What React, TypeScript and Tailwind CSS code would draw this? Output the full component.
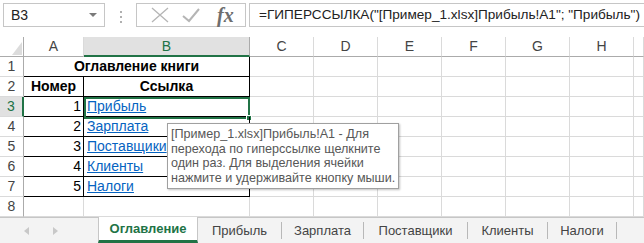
import React from 'react';

const font = { fontFamily: '"Liberation Sans", Arial, sans-serif' };

const colLetters = ['A', 'B', 'C', 'D', 'E', 'F', 'G', 'H', ''];
const colWidths = ['w-[60px]', 'w-[166px]', 'w-[64px]', 'w-[64px]', 'w-[64px]', 'w-[64px]', 'w-[64px]', 'w-[64px]', 'w-[10px]'];

const rows = [
  { n: 1, merged: 'Оглавление книги' },
  { n: 2, a: 'Номер', b: 'Ссылка', head: true },
  { n: 3, a: '1', b: 'Прибыль' },
  { n: 4, a: '2', b: 'Зарплата' },
  { n: 5, a: '3', b: 'Поставщики' },
  { n: 6, a: '4', b: 'Клиенты' },
  { n: 7, a: '5', b: 'Налоги' },
  { n: 8 },
];

const tabs = [
  { name: 'Прибыль', w: 'w-[84px]' },
  { name: 'Зарплата', w: 'w-[82px]' },
  { name: 'Поставщики', w: 'w-[104px]' },
  { name: 'Клиенты', w: 'w-[80px]' },
  { name: 'Налоги', w: 'w-[69px]' },
];

function FormulaBar() {
  return (
    <div className="flex h-[37px] items-start bg-white pt-[3px]">
      <div className="ml-[3px] flex h-[24px] w-[102px] items-center justify-between border border-[#c6c6c6] pl-[7px] pr-[7px]">
        <span className="text-[14px] text-[#222]">B3</span>
        <svg width="8" height="5" viewBox="0 0 8 5">
          <path d="M0 0 L8 0 L4 4 Z" fill="#7a7a7a" />
        </svg>
      </div>
      <div className="flex w-[31px] flex-col items-center justify-center gap-[3px] pt-[8px]">
        <div className="h-[2px] w-[2px] bg-[#b0b0b0]" />
        <div className="h-[2px] w-[2px] bg-[#b0b0b0]" />
        <div className="h-[2px] w-[2px] bg-[#b0b0b0]" />
      </div>
      <div className="flex h-[24px] w-[110px] items-center border border-[#c6c6c6]">
        <svg width="20" height="16" viewBox="0 0 20 16" className="ml-[13px]">
          <path d="M2 1 L18 15 M18 1 L2 15" stroke="#b5b5b5" strokeWidth="1.3" fill="none" />
        </svg>
        <svg width="20" height="16" viewBox="0 0 20 16" className="ml-[11px]">
          <path d="M2 9 L8 14 L18 2" stroke="#b5b5b5" strokeWidth="2" fill="none" />
        </svg>
        <span
          className="ml-[16px] text-[20px] italic leading-none text-[#6e6e6e]"
          style={{ fontFamily: '"Liberation Serif", "Times New Roman", serif', fontWeight: 700 }}
        >
          fx
        </span>
      </div>
      <div className="ml-[3px] flex h-[24px] flex-1 items-center border border-r-0 border-[#c6c6c6] pl-[9px]">
        <span className="whitespace-nowrap text-[13.6px] text-[#222]">
          =ГИПЕРССЫЛКА("[Пример_1.xlsx]Прибыль!A1"; "Прибыль")
        </span>
      </div>
    </div>
  );
}

function HeaderRow() {
  return (
    <div className="flex h-[20px]">
      <div className="relative w-[24px] border-b border-r border-[#ababab] bg-white">
        <svg width="10" height="13" viewBox="0 0 10 13" className="absolute bottom-[1px] right-[1px]">
          <path d="M10 0 L10 13 L0 13 Z" fill="#dcdcdc" />
        </svg>
      </div>
      {colLetters.map((c, i) => (
        <div
          key={i}
          className={`${colWidths[i]} flex items-center justify-center text-[14px] ${
            c === 'B'
              ? 'border-b-2 border-r border-b-[#217346] border-r-[#ababab] bg-[#e1e1e1] text-[#217346]'
              : 'border-b border-r border-b-[#ababab] border-r-[#dadada] bg-white text-[#444]'
          }`}
        >
          {c}
        </div>
      ))}
    </div>
  );
}

function GridRow({ r }: { r: (typeof rows)[number] }) {
  const inTable = r.n <= 7;
  const selected = r.n === 3;
  return (
    <div className="flex h-[20px]">
      <div
        className={`flex w-[24px] items-center justify-center border-b border-b-[#dadada] text-[14px] ${
          selected
            ? 'border-r-2 border-r-[#217346] bg-[#e1e1e1] text-[#217346]'
            : 'border-r border-r-[#ababab] bg-white text-[#444]'
        }`}
      >
        {r.n}
      </div>
      {r.merged ? (
        <div className="flex w-[226px] items-center justify-center border-b border-r border-black text-[14px] font-bold text-black">
          {r.merged}
        </div>
      ) : (
        <>
          <div
            className={`flex w-[60px] items-center border-b border-r text-[14px] text-black ${
              inTable ? 'border-black' : 'border-[#dadada]'
            } ${r.head ? 'justify-center font-bold' : 'justify-end pr-[2px]'}`}
          >
            {r.a}
          </div>
          <div
            className={`relative flex w-[166px] items-center border-b border-r text-[14px] ${
              inTable ? 'border-black' : 'border-[#dadada]'
            } ${r.head ? 'justify-center font-bold text-black' : 'pl-[3px]'}`}
          >
            {r.head ? r.b : r.b ? <span className="text-[#0563c1] underline">{r.b}</span> : null}
            {selected && (
              <div className="absolute left-0 top-0 h-[22px] w-[166px] border-2 border-[#217346]">
                <div className="absolute -bottom-[4px] -right-[4px] h-[6px] w-[6px] border border-white bg-[#217346]" />
              </div>
            )}
          </div>
        </>
      )}
      {colWidths.slice(2).map((w, i) => (
        <div key={i} className={`${w} border-b border-r border-[#dadada]`} />
      ))}
    </div>
  );
}

function Tooltip() {
  return (
    <div className="absolute left-[167px] top-[123px] z-10 border border-[#a0a0a0] bg-white px-[3px] py-[3px] text-[12.6px] leading-[14.5px] text-[#575757] shadow-[1px_1px_2px_rgba(0,0,0,0.25)]">
      <div className="whitespace-nowrap">[Пример_1.xlsx]Прибыль!A1 - Для</div>
      <div className="whitespace-nowrap">перехода по гиперссылке щелкните</div>
      <div className="whitespace-nowrap">один раз. Для выделения ячейки</div>
      <div className="whitespace-nowrap">нажмите и удерживайте кнопку мыши.</div>
    </div>
  );
}

function SheetTabs() {
  return (
    <div className="flex h-[26px] items-stretch border-t border-[#c6c6c6] bg-[#f3f3f3]">
      <div className="flex w-[98px] items-center">
        <svg width="6" height="8" viewBox="0 0 6 8" className="ml-[24px]">
          <path d="M5 0 L5 8 L0 4 Z" fill="#c8c8c8" />
        </svg>
        <svg width="6" height="8" viewBox="0 0 6 8" className="ml-[23px]">
          <path d="M0 0 L0 8 L5 4 Z" fill="#c8c8c8" />
        </svg>
      </div>
      <div className="-mt-[1px] flex w-[100px] items-center justify-center border-b-[3px] border-l border-r border-b-[#217346] border-l-[#c6c6c6] border-r-[#c6c6c6] bg-white text-[13px] font-bold text-[#217346]">
        Оглавление
      </div>
      {tabs.map((t) => (
        <div key={t.name} className={`${t.w} flex items-center py-[4px]`}>
          <div className="flex h-full flex-1 items-center justify-center text-[13px] text-[#444]">{t.name}</div>
          <div className="h-full w-px bg-[#b8b8b8]" />
        </div>
      ))}
      <div className="flex-1" />
    </div>
  );
}

export default function App() {
  return (
    <div className="relative h-[243px] w-[644px] overflow-hidden bg-white" style={font}>
      <FormulaBar />
      <HeaderRow />
      {rows.map((r) => (
        <GridRow key={r.n} r={r} />
      ))}
      <SheetTabs />
      <Tooltip />
    </div>
  );
}
